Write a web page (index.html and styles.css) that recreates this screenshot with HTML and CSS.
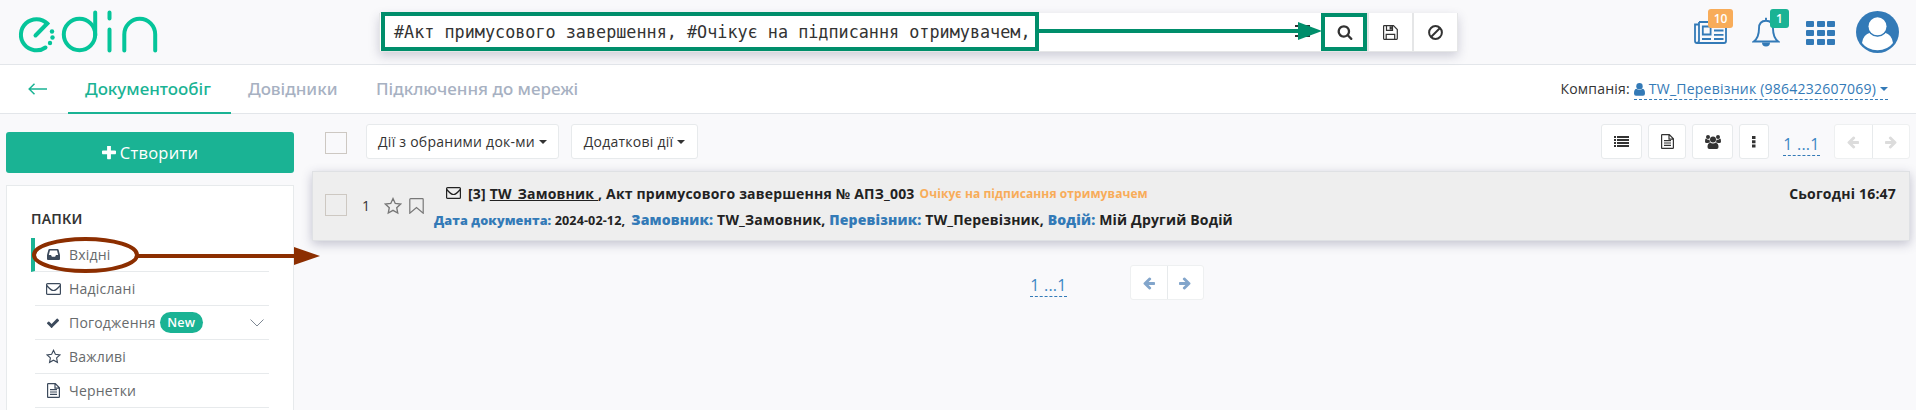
FILE: index.html
```html
<!DOCTYPE html>
<html lang="uk">
<head>
<meta charset="utf-8">
<title>EDIN</title>
<link rel="stylesheet" href="styles.css">
</head>
<body>
<svg class="sprite" aria-hidden="true">
  <symbol id="search" viewBox="0 0 1792 1792"><path d="M1216 832q0-185-131.500-316.500t-316.500-131.500-316.500 131.500-131.500 316.500 131.500 316.500 316.500 131.500 316.500-131.500 131.500-316.500zm512 832q0 52-38 90t-90 38q-54 0-90-38l-343-342q-179 124-399 124-143 0-273.500-55.500t-225-150-150-225-55.500-273.500 55.500-273.500 150-225 225-150 273.500-55.500 273.500 55.500 225 150 150 225 55.500 273.500q0 220-124 399l343 343q37 37 37 90z"/></symbol>
  <symbol id="arrow" viewBox="0 0 1792 1792"><path d="M1664 896v128q0 53-32.500 90.500t-84.500 37.500h-704l293 294q38 36 38 90t-38 90l-75 76q-37 37-90 37-52 0-91-37l-651-652q-37-37-37-90 0-52 37-91l651-650q38-38 91-38 52 0 90 38l75 74q38 38 38 91t-38 91l-293 293h704q52 0 84.500 37.500t32.500 90.500z"/></symbol>
  <symbol id="check" viewBox="0 0 1792 1792"><path d="M1671 566q0 40-28 68l-724 724-136 136q-28 28-68 28t-68-28l-136-136-362-362q-28-28-28-68t28-68l136-136q28-28 68-28t68 28l294 295 656-657q28-28 68-28t68 28l136 136q28 28 28 68z"/></symbol>
  <symbol id="plus" viewBox="192 192 1408 1408"><path d="M1600 736v192q0 40-28 68t-68 28h-416v416q0 40-28 68t-68 28h-192q-40 0-68-28t-28-68v-416h-416q-40 0-68-28t-28-68v-192q0-40 28-68t68-28h416v-416q0-40 28-68t68-28h192q40 0 68 28t28 68v416h416q40 0 68 28t28 68z"/></symbol>
  <symbol id="envelope" viewBox="0 0 15 12"><path class="line" d="M1.600.6h11.800q1 0 1 1v8.800q0 1-1 1H1.600q-1 0-1-1V1.600q0-1 1-1zM.8 2.500C2.500 4.600 5.500 7.500 7.500 7.500s5-2.900 6.700-5"/></symbol>
  <symbol id="star" viewBox="0 0 16 16"><path class="line" d="M8 1.400l2 4.300 4.800.6-3.500 3.200.9 4.700L8 11.900l-4.200 2.300.9-4.700L1.200 6.300 6 5.700z"/></symbol>
  <symbol id="bookmark" viewBox="0 0 15 16"><path class="line" d="M1.600.7h11.800q.8 0 .8.800v13.700L7.500 9.600.8 15.200V1.500q0-.8.800-.8z"/></symbol>
  <symbol id="file" viewBox="0 0 13 15"><path class="line" d="M1.300.6h7l4.100 4.200v8.900q0 .7-.7.700H1.300q-.7 0-.7-.7V1.300q0-.7.700-.7zM8 .8v4.300h4.200M3 6.700h7M3 9h7M3 11.300h7"/></symbol>
  <symbol id="inbox" viewBox="0 0 13 11"><path d="M2.500 0h8q.8 0 1.100.8L13 6v4q0 1-1 1H1q-1 0-1-1V6L1.400.8Q1.700 0 2.500 0zM3 1.600L1.800 6.100H4l.9 1.700h3.200L9 6.100h2.200L10 1.600z" fill-rule="evenodd"/></symbol>
  <symbol id="floppy" viewBox="0 0 15 15"><path class="line" d="M1.200.7h9.300l3.800 3.800v9.100q0 .7-.7.700H1.200q-.6 0-.6-.7V1.300q0-.6.600-.6zM3.200 14V9.300h8.500V14M3.500 1v4.400h6V1"/><path d="M6.600 1.300h2.300v3.300H6.600z"/></symbol>
  <symbol id="ban" viewBox="0 0 15 15"><circle class="thick" cx="7.500" cy="7.500" r="6.400"/><path class="thick" d="M12 3L3 12"/></symbol>
  <symbol id="list" viewBox="0 0 15 11"><path d="M0 0h2v2H0zM3 0h12v2H3zM0 3h2v2H0zM3 3h12v2H3zM0 6h2v2H0zM3 6h12v2H3zM0 9h2v2H0zM3 9h12v2H3z"/></symbol>
  <symbol id="users" viewBox="0 0 16 14"><circle cx="3" cy="2" r="2"/><circle cx="13" cy="2" r="2"/><circle cx="8" cy="4.500" r="3"/><path d="M2 4.300q1.300.8 2.600.4-.2 2 1 3Q4 7.300 3 8.100H1.500Q0 8.100 0 6.600 0 3.500 1 3.600zM14 4.300q-1.300.8-2.600.4.200 2-1 3 1.600-.4 2.600.4h1.500q1.500 0 1.500-1.500 0-3.100-1-3zM5.200 7.700q2.800 1.600 5.600 0Q13.500 8 13.500 12q0 2-1.800 2H4.300q-1.800 0-1.800-2 0-4 2.700-4.300z"/></symbol>
  <symbol id="user" viewBox="0 0 11 13"><circle cx="5.500" cy="3.300" r="3.200"/><path d="M2.200 5.800q3.300 2.200 6.600 0Q11 6.300 11 10.500q0 2.300-2 2.300H2q-2 0-2-2.300 0-4.200 2.200-4.700z"/></symbol>
</svg>

<header class="topbar">
  <svg class="logo" viewBox="0 0 140 44" fill="none" stroke="#05c59a" stroke-width="4" stroke-linecap="round">
    <path d="M17.500 25.500L29.300 13.500A15.600 15.600 0 1 0 27.500 37.500"/>
    <g fill="#05c59a" stroke="none"><circle cx="34" cy="21.500" r="2.200"/><circle cx="34.500" cy="27.500" r="2.200"/><circle cx="32" cy="33" r="2.200"/></g>
    <circle cx="61.500" cy="24.500" r="15.700"/><path d="M77.200 2.500v23M91.500 2.500v6M91.500 19.500v21M106.300 40.500V24.500a15.400 15.700 0 0 1 30.900 0v16"/>
  </svg>
  <div class="search">
    <div class="query">#Акт примусового завершення, #Очікує на підписання отримувачем,</div>
    <div class="menu-btn"><i></i><i></i><i></i></div>
    <div class="search-btn first"><svg width="16" height="16"><use href="#search"/></svg></div>
    <div class="search-btn"><svg width="15" height="15"><use href="#floppy"/></svg></div>
    <div class="search-btn last"><svg width="15" height="15"><use href="#ban"/></svg></div>
  </div>
  <div class="tools">
    <div class="tool news">
      <svg width="33" height="23" viewBox="0 0 33 23" fill="none" stroke="#337ab7" stroke-width="1.800"><path d="M5 1h26q1 0 1 1v18q0 2-2 2H3q-2 0-2-2V3.500h4M5 1v18.500q0 2.300-2 2.300M8.800 5.500h7.800v8H8.800zM20 5.300h9.500M20 9.500h9.500M20 13.800h9.500M8 18h9M20 18h9.500"/></svg>
      <span class="badge orange">10</span>
    </div>
    <div class="tool bell">
      <svg width="28" height="30" viewBox="0 0 28 30" fill="none" stroke="#337ab7" stroke-width="1.900"><path d="M1.800 24.500Q7 20.500 7 11.500 7 3.800 14 3.800t7 7.700q0 9 5.200 13zM14 .8v3"/><path d="M10 25.500a4 4 0 0 0 8 0z" fill="#337ab7" stroke="none"/></svg>
      <span class="badge green">1</span>
    </div>
    <div class="grid"><i></i><i></i><i></i><i></i><i></i><i></i><i></i><i></i><i></i></div>
    <svg class="avatar" width="43" height="42" viewBox="0 0 43 42"><ellipse cx="21.500" cy="21" rx="21.500" ry="21" fill="#337ab7"/><path d="M6 32q1-8.500 8.500-10.500 7 7.500 14 0Q36 23.500 37 32q-5.500 7.200-15.500 7.200T6 32z" fill="#fff"/><circle cx="21.500" cy="15.300" r="10.500" fill="#337ab7"/><circle cx="21.500" cy="15.300" r="9" fill="#fff"/></svg>
  </div>
</header>

<nav class="nav">
  <svg class="back" width="19" height="12" viewBox="0 0 19 12" fill="none" stroke="#1ab394" stroke-width="1.500"><path d="M6.500.8L1.200 6l5.300 5.200M1.200 6H19"/></svg>
  <div class="tab active"><span>Документообіг</span></div>
  <div class="tab second"><span>Довідники</span></div>
  <div class="tab third"><span>Підключення до мережі</span></div>
  <div class="company"><span class="label">Компанія:</span><a class="account"><svg width="11" height="13"><use href="#user"/></svg><span>TW_Перевізник (9864232607069)</span><b class="caret"></b></a></div>
</nav>

<div class="page">
  <aside class="side">
    <div class="create"><svg width="14" height="14"><use href="#plus"/></svg><span>Створити</span></div>
    <div class="panel">
      <h4>ПАПКИ</h4>
      <div class="folder current"><span class="ico"><svg width="13" height="11"><use href="#inbox"/></svg></span><span>Вхідні</span></div>
      <div class="folder"><span class="ico"><svg width="15" height="12"><use href="#envelope"/></svg></span><span>Надіслані</span></div>
      <div class="folder"><span class="ico"><svg width="14" height="14"><use href="#check"/></svg></span><span>Погодження</span><em>New</em><svg class="chev" width="14" height="8" viewBox="0 0 14 8" fill="none" stroke="#7e8894"><path d="M.5.5L7 7 13.500.5"/></svg></div>
      <div class="folder"><span class="ico"><svg width="15" height="15"><use href="#star"/></svg></span><span>Важливі</span></div>
      <div class="folder"><span class="ico"><svg width="13" height="15"><use href="#file"/></svg></span><span>Чернетки</span></div>
    </div>
  </aside>

  <main class="main">
    <div class="bar">
      <i class="checkbox"></i>
      <div class="btn b1"><span>Дії з обраними док-ми</span><b class="caret"></b></div>
      <div class="btn b2"><span>Додаткові дії</span><b class="caret"></b></div>
      <div class="right">
        <div class="btn w41"><svg width="15" height="11"><use href="#list"/></svg></div>
        <div class="btn w38"><svg width="13" height="15"><use href="#file"/></svg></div>
        <div class="btn w41"><svg width="16" height="14"><use href="#users"/></svg></div>
        <div class="btn w30"><svg width="4" height="12" viewBox="0 0 4 12"><path d="M0 0h3.500v3H0zM0 4.300h3.500v3H0zM0 8.600h3.500v3H0z"/></svg></div>
        <span class="pages">1 ...1</span>
        <div class="pager off"><span><svg width="14" height="14"><use href="#arrow"/></svg></span><span><svg class="flip" width="14" height="14"><use href="#arrow"/></svg></span></div>
      </div>
    </div>

    <div class="doc">
      <i class="checkbox"></i>
      <span class="num">1</span>
      <svg class="mark star" width="18" height="18"><use href="#star"/></svg>
      <svg class="mark" width="15" height="16"><use href="#bookmark"/></svg>
      <div class="body">
        <div class="line1"><svg width="15" height="12"><use href="#envelope"/></svg><span class="title">[3] <u>TW_Замовник </u>, Акт примусового завершення № АПЗ_003</span><span class="status">Очікує на підписання отримувачем</span><span class="date">Сьогодні 16:47</span></div>
        <div class="line2"><span class="small"><b>Дата документа:</b> 2024-02-12,</span><span class="fields"><b>Замовник:</b> TW_Замовник, <b>Перевізник:</b> TW_Перевізник, <b>Водій:</b> Мій Другий Водій</span></div>
      </div>
    </div>

    <div class="foot">
      <span class="pages">1 ...1</span>
      <div class="pager on"><span><svg width="14" height="14"><use href="#arrow"/></svg></span><span><svg class="flip" width="14" height="14"><use href="#arrow"/></svg></span></div>
    </div>
  </main>
</div>

<svg class="callouts" width="1916" height="410" viewBox="0 0 1916 410" fill="none">
  <g stroke="#008e6b" stroke-width="4"><path d="M383 14h654v35H383zM1323 15h42v34h-42zM1039 31h262"/></g>
  <path d="M1298 22l24 9-24 9z" fill="#008e6b"/>
  <g stroke="#8c2e00" stroke-width="4"><ellipse cx="85.500" cy="255" rx="51.500" ry="16"/><path d="M138 256h158"/></g>
  <path d="M294 247l26 9-26 9z" fill="#8c2e00"/>
</svg>
</body>
</html>
```

FILE: styles.css
```css
* { box-sizing: border-box; }
body { margin: 0; width: 1916px; height: 410px; overflow: hidden; position: relative; background: #f9f9fb; color: #333; font: 14px "Open Sans", "Noto Sans", sans-serif; letter-spacing: .2px; }
svg { display: block; flex: none; fill: currentColor; }
svg[fill="none"] { fill: none; }
span { white-space: pre; }
.sprite { position: absolute; width: 0; height: 0; }
.line { fill: none; stroke: currentColor; stroke-width: 1.2; }
.thick { fill: none; stroke: currentColor; stroke-width: 2; }
.caret { width: 8px; height: 4px; border: 4px solid transparent; border-top-color: currentColor; border-bottom: 0; flex: none; }

.topbar { display: flex; align-items: flex-start; height: 65px; border-bottom: 1px solid #e3e6ea; }
.logo { width: 140px; height: 44px; margin: 10px 0 0 18px; }
.search { display: flex; height: 39px; width: 1079px; margin: 13px 0 0 221px; background: #fff; border: 1px solid #e5e6e7; border-top: 0; box-shadow: 0 4px 10px rgba(50, 50, 93, .22); }
.query { flex: 1; width: 0; padding-left: 14px; font: 16.8px/38px "DejaVu Sans Mono", monospace; letter-spacing: 0; color: #333; white-space: pre; }
.menu-btn { width: 44px; padding: 12px 0 0 15px; display: grid; align-content: start; gap: 3px; }
.menu-btn i { height: 2px; width: 15px; background: #333; }
.search-btn { width: 45px; display: flex; align-items: center; justify-content: center; border-right: 2px solid #e5e6e7; }
.search-btn.first { padding-right: 2px; }
.search-btn.last { border: 0; width: 43px; }
.tools { display: flex; margin-left: 236px; }
.tool { position: relative; color: #337ab7; }
.news { margin-top: 21px; width: 33px; }
.bell { margin: 17px 0 0 25px; width: 28px; }
.badge { position: absolute; height: 19px; border-radius: 3px; color: #fff; font: 600 12px/19px "Open Sans", sans-serif; letter-spacing: 0; text-align: center; }
.orange { left: 14px; top: -12px; width: 25px; background: #f8ac59; }
.green { left: 18px; top: -8px; width: 19px; background: #1ab394; }
.grid { display: grid; grid-template-columns: repeat(3, 8px); grid-auto-rows: 6px; gap: 3px 2.500px; margin: 21px 0 0 26px; }
.grid i { background: #337ab7; border-radius: 1px; }
.avatar { margin: 11px 0 0 21px; }

.nav { display: flex; align-items: stretch; height: 49px; background: #fff; border-bottom: 1px solid #e3e6ea; }
.back { margin: 18px 0 0 28px; }
.tab { font: 500 17px/48px "Noto Sans", "Open Sans", sans-serif; letter-spacing: 0; color: #a7b1c2; height: 49px; }
.tab.active { width: 163px; margin-left: 21px; padding-left: 17px; color: #1ab394; border-bottom: 2px solid #1ab394; }
.second { padding-left: 17px; width: 128px; }
.third { padding-left: 17px; }
.company { margin: 14px 28px 0 auto; display: flex; line-height: 20px; }
.account { display: flex; align-items: center; height: 21px; margin-left: 4px; color: #337ab7; border-bottom: 1px dashed #337ab7; letter-spacing: .23px; }
.account svg { margin-right: 4px; }
.account .caret { margin-left: 4px; }

.page { display: flex; }
.side { width: 288px; margin: 18px 0 0 6px; flex: none; }
.create { display: flex; align-items: center; justify-content: center; gap: 4px; height: 41px; border-radius: 3px; background: #1ab394; color: #fff; font-size: 16.5px; letter-spacing: .25px; }
.panel { margin-top: 12px; height: 240px; background: #fff; border: 1px solid #e7eaec; padding: 23px 24px 0; }
.panel h4 { margin: 0 0 20px; font: 600 14px/20px "Noto Sans", "Open Sans", sans-serif; color: #333; height: 9px; }
.folder { display: flex; align-items: center; height: 34px; margin-left: 4px; border-bottom: 1px solid #e7eaec; color: #676a6c; }
.folder.current { margin-left: 0; border-left: 4px solid #1ab394; }
.ico { width: 34px; padding-left: 2px; display: flex; justify-content: center; color: #3c4a5c; }
.folder em { margin-left: 4px; width: 43px; height: 21px; border-radius: 11px; background: #1ab394; color: #fff; font: 600 12.6px/21px "Open Sans", sans-serif; text-align: center; }
.chev { margin: 0 5px 0 auto; }

.main { flex: 1; padding: 10px 6px 0 18px; }
.bar { display: flex; height: 35px; margin-left: 13px; }
.checkbox { width: 22px; height: 22px; border: 1px solid #cdc8c2; flex: none; }
.bar .checkbox { margin: 8px 19px 0 0; }
.btn { display: flex; align-items: center; justify-content: center; height: 35px; gap: 4px; background: #fff; border: 1px solid #e7eaec; border-radius: 3px; letter-spacing: .25px; }
.b1 { width: 193px; }
.b2 { width: 127px; margin-left: 12px; }
.right { display: flex; margin-left: auto; }
.w41 { width: 41px; }
.w38 { width: 38px; margin: 0 6px; }
.w30 { width: 30px; margin-left: 6px; }
.pages { height: 23px; font-size: 16px; line-height: 22px; color: #3b86c4; border-bottom: 1px dashed #337ab7; }
.right .pages { margin: 9px 14px 0; width: 37px; text-align: center; }
.pager { display: flex; height: 35px; border: 1px solid #eef0f1; border-radius: 3px; background: #fff; }
.pager span { display: flex; align-items: center; justify-content: center; flex: 1; }
.pager span + span { border-left: 1px solid #e7eaec; }
.off { width: 76px; color: #dcdcdc; }
.on { width: 74px; color: #82a5cb; }
.flip { transform: scaleX(-1); }

.doc { display: flex; height: 70px; margin-top: 12px; padding-left: 11px; background: #eee; border: 1px solid #dfe1e4; box-shadow: 0 3px 10px rgba(50, 50, 93, .28); }
.doc .checkbox { margin: 22px 15px 0 1px; }
.num { line-height: 20px; margin-top: 24px; width: 22px; }
.mark { margin-top: 26px; color: #777; }
.star { margin: 25px 7px 0 0; }
.body { flex: 1; margin-left: 10px; font-weight: 700; color: #222; }
.line1 { display: flex; height: 20px; margin-top: 11px; align-items: center; padding-left: 12px; }
.title { margin-left: 7px; }
.status { margin-left: 5px; font-size: 12px; letter-spacing: .08px; color: #f8ac59; }
.date { margin: 0 13px 0 auto; }
.line2 { display: flex; align-items: baseline; gap: 6px; margin-top: 7px; line-height: 20px; letter-spacing: .17px; }
.line2 b { color: #337ab7; }
.small { font-size: 12.6px; letter-spacing: .1px; }
.foot { display: flex; margin: 24px 0 0 718px; }
.foot .pages { width: 37px; margin: 9px 63px 0 0; text-align: center; }
.callouts { position: absolute; left: 0; top: 0; }
```
